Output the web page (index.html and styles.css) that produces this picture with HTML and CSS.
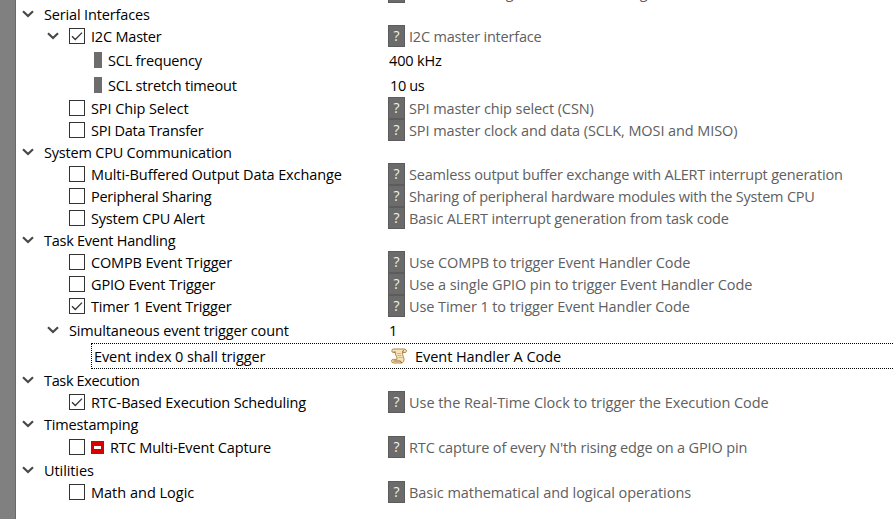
FILE: index.html
```
<!DOCTYPE html>
<html lang="en">
<head>
<meta charset="utf-8">
<title>Task resources</title>
<link rel="stylesheet" href="styles.css">
</head>
<body>
<svg class="defs" width="0" height="0">
<symbol id="chev" viewBox="0 0 12 8"><path d="M1 1.300 6 6 11 1.300" fill="none" stroke="#484848" stroke-width="2.200"/></symbol>
<symbol id="tick" viewBox="0 0 14 14"><path d="M2 7.200 5.300 10.500 12 3.600" fill="none" stroke="#333" stroke-width="1.300"/></symbol>
</svg>
<div class="gutter"></div>
<main class="tree">
<div class="row r-cut"><div class="name"></div><div class="val"><span class="help">?</span><span class="desc">Code for timing and sensor reading</span></div></div>
<div class="row group"><div class="name"><svg class="chev"><use href="#chev"/></svg><span class="t15">Serial Interfaces</span></div></div>
<div class="row item"><div class="name"><svg class="chev"><use href="#chev"/></svg><i class="box"><svg><use href="#tick"/></svg></i><span class="t20">I2C Master</span></div><div class="val"><span class="help">?</span><span class="desc t20">I2C master interface</span></div></div>
<div class="row h26 leaf"><div class="name"><i class="bar"></i><span class="t20">SCL frequency</span></div><div class="val"><span class="t15">400 kHz</span></div></div>
<div class="row h24 leaf"><div class="name"><i class="bar"></i><span class="t20">SCL stretch timeout</span></div><div class="val"><span class="num t35">10 us</span></div></div>
<div class="row item"><div class="name"><i class="box"></i><span class="t10">SPI Chip Select</span></div><div class="val"><span class="help">?</span><span class="desc t10">SPI master chip select (CSN)</span></div></div>
<div class="row item"><div class="name"><i class="box"></i><span class="t25">SPI Data Transfer</span></div><div class="val"><span class="help">?</span><span class="desc t10">SPI master clock and data (SCLK, MOSI and MISO)</span></div></div>
<div class="row group"><div class="name"><svg class="chev"><use href="#chev"/></svg><span class="t20">System CPU Communication</span></div></div>
<div class="row item"><div class="name"><i class="box"></i><span class="t10">Multi-Buffered Output Data Exchange</span></div><div class="val"><span class="help">?</span><span class="desc t20">Seamless output buffer exchange with ALERT interrupt generation</span></div></div>
<div class="row item"><div class="name"><i class="box"></i><span class="t25">Peripheral Sharing</span></div><div class="val"><span class="help">?</span><span class="desc t20">Sharing of peripheral hardware modules with the System CPU</span></div></div>
<div class="row item"><div class="name"><i class="box"></i><span class="t20">System CPU Alert</span></div><div class="val"><span class="help">?</span><span class="desc t15">Basic ALERT interrupt generation from task code</span></div></div>
<div class="row group"><div class="name"><svg class="chev"><use href="#chev"/></svg><span class="t25">Task Event Handling</span></div></div>
<div class="row item"><div class="name"><i class="box"></i><span class="t15">COMPB Event Trigger</span></div><div class="val"><span class="help">?</span><span class="desc t10">Use COMPB to trigger Event Handler Code</span></div></div>
<div class="row item"><div class="name"><i class="box"></i><span class="t15">GPIO Event Trigger</span></div><div class="val"><span class="help">?</span><span class="desc t10">Use a single GPIO pin to trigger Event Handler Code</span></div></div>
<div class="row item"><div class="name"><i class="box"><svg><use href="#tick"/></svg></i><span class="t15">Timer 1 Event Trigger</span></div><div class="val"><span class="help">?</span><span class="desc t10">Use Timer 1 to trigger Event Handler Code</span></div></div>
<div class="row h26 sub"><div class="name"><svg class="chev"><use href="#chev"/></svg><span class="t15">Simultaneous event trigger count</span></div><div class="val"><span>1</span></div></div>
<div class="row focus"><div class="name"><span class="t10">Event index 0 shall trigger</span></div><div class="val"><svg class="scroll" viewBox="0 0 16 16"><path d="M2.500 1H13Q15.500 1 15.500 3.200Q15.300 4.800 13 4.600H11.600Q11.200 6.500 12.400 8.700Q13.700 11.500 12.600 13.500Q11.900 15 10.500 15H2.500Q.6 14.800 .6 13T2.500 11.300H6Q6.300 9.500 5 7.500Q4.100 6 4.400 4.600H2.500Q.8 4.500 .8 2.800T2.500 1Z" fill="#f5e2b8" stroke="#b0874c"/><path d="M2.500 4H4.600M11.600 4.600Q11.400 2.500 13 2.500M2.500 13H9.500Q9.600 14.800 11 14.700" fill="none" stroke="#94692f"/><path d="M6 5.500H10M6.500 7.500H10.500M7.500 9.500H11.500" fill="none" stroke="#d0a968" stroke-width=".8"/></svg><span class="t05">Event Handler A Code</span></div></div>
<div class="row group"><div class="name"><svg class="chev"><use href="#chev"/></svg><span class="t35">Task Execution</span></div></div>
<div class="row item"><div class="name"><i class="box"><svg><use href="#tick"/></svg></i><span class="t15">RTC-Based Execution Scheduling</span></div><div class="val"><span class="help">?</span><span class="desc t05">Use the Real-Time Clock to trigger the Execution Code</span></div></div>
<div class="row group"><div class="name"><svg class="chev"><use href="#chev"/></svg><span class="t15">Timestamping</span></div></div>
<div class="row h24 item"><div class="name"><i class="box"></i><i class="stop"></i><span class="t15">RTC Multi-Event Capture</span></div><div class="val"><span class="help">?</span><span class="desc t15">RTC capture of every N'th rising edge on a GPIO pin</span></div></div>
<div class="row group"><div class="name"><svg class="chev"><use href="#chev"/></svg><span class="t10">Utilities</span></div></div>
<div class="row item"><div class="name"><i class="box"></i><span>Math and Logic</span></div><div class="val"><span class="help">?</span><span class="desc t05">Basic mathematical and logical operations</span></div></div>
</main>
</body>
</html>
```
FILE: styles.css
```
*{box-sizing:border-box}
body{margin:0;height:519px;overflow:hidden;display:flex;background:#fff;color:#000;font:14.5px/20px "Open Sans","Noto Sans",sans-serif}
.defs{position:absolute}
.gutter{width:16px;background:#808080;border-right:1px solid #696969;flex:none}
.tree{flex:1;min-width:0}
.row{display:flex;height:22px;align-items:center;white-space:nowrap}
.row span:not(.help){padding-top:2px}
.r-cut{height:22px;margin-top:-19px}
.h24{height:24px}
.h26{height:26px}
.name{display:flex;align-items:center;width:372px;height:100%;flex:none}
.val{display:flex;align-items:center;height:100%}
.group .name{padding-left:6px}
.chev{width:12px;height:8px;margin-right:10px;flex:none}
.item .name{padding-left:53px}
.item .chev{margin:0 10px 0 -22px}
.box{width:16px;height:16px;border:1px solid #333;margin-right:6px;flex:none;display:block}
.box svg{display:block;width:14px;height:14px}
.leaf .name{padding-left:78px}
.bar{width:8px;height:16px;background:#6d6d6d;margin-right:6px}
.sub .name{padding-left:31px}
.help{width:17px;height:22px;background:#6b6b6b;border:1px solid #5c5c5c;color:#f2f2f2;text-align:center;line-height:20px;margin-right:4px;font-size:14px}
.desc{color:#606060}
.val>span:first-child:not(.help){margin-left:1px}
.val>.num:first-child:not(.help){margin-left:2px}
.focus{height:26px;margin-left:75px;border:1px dotted #000;border-right:0}
.focus .name{width:296px;padding-left:2px}
.scroll{width:16px;height:16px;margin:0 8px 0 3px}
.stop{width:13px;height:13px;border:solid #d90000;border-width:5px 3px;background:#fff;margin-right:6px}
.t05{letter-spacing:-.05px}
.t10{letter-spacing:-.09px}
.t15{letter-spacing:-.15px}
.t20{letter-spacing:-.2px}
.t25{letter-spacing:-.26px}
.t35{letter-spacing:-.35px}
```
